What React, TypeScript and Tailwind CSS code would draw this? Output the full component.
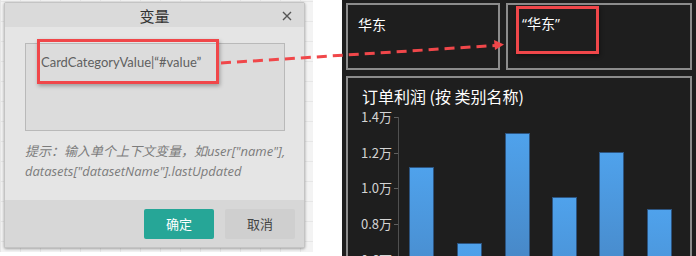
import React from "react";

const bars = [
  { x: 61, top: 61 },
  { x: 109, top: 137 },
  { x: 157, top: 27 },
  { x: 204, top: 91 },
  { x: 251, top: 46 },
  { x: 299, top: 103 },
];

const ticks = [
  { y: 11, label: "1.4万" },
  { y: 47, label: "1.2万" },
  { y: 82, label: "1.0万" },
  { y: 118, label: "0.8万" },
  { y: 154, label: "0.6万" },
];

export default function App() {
  return (
    <div className="relative w-[696px] h-[256px] bg-white overflow-hidden flex">
      {/* Left editor area */}
      <div className="w-[313px] h-[252px] bg-[#f3f3f3] bg-[linear-gradient(#e6e6e6_1px,transparent_1px),linear-gradient(90deg,#e6e6e6_1px,transparent_1px)] bg-[size:20px_20px] bg-[position:0_1px] pl-[4px] pt-[2px]">
        <div className="w-[301px] h-[246px] flex flex-col border border-[#c4c4c4] rounded-[2px] shadow-[0_1px_3px_rgba(0,0,0,0.35)] bg-[#e5e5e5] overflow-hidden font-['Open_Sans','Noto_Sans_CJK_SC',sans-serif]">
          <div className="relative h-[24px] bg-[#dadada] flex items-center justify-center shrink-0">
            <span className="text-[15px] text-[#333] font-['Noto_Sans_CJK_SC',sans-serif] leading-none">变量</span>
            <svg className="absolute right-[12px] top-[8px]" width="10" height="10" viewBox="0 0 10 10">
              <path d="M1 1 L9 9 M9 1 L1 9" stroke="#555" strokeWidth="1.4" />
            </svg>
          </div>
          <div className="flex-1 px-[20px] pt-[16px]">
            <div className="w-[260px] h-[88px] bg-[#dcdcdc] border border-[#b9b9b9] pl-[15px] pt-[9px] text-[13px] leading-[18px] text-[#606060] font-['Lato','Noto_Sans_CJK_SC',sans-serif]">
              CardCategoryValue|“#value”
            </div>
            <div className="mt-[10px] text-[13px] leading-[20px] italic text-[#7c7c7c] font-['Open_Sans','Noto_Sans_CJK_SC',sans-serif] whitespace-nowrap">
              <div>提示：输入单个上下文变量，如user["name"],</div>
              <div>datasets["datasetName"].lastUpdated</div>
            </div>
          </div>
          <div className="h-[47px] bg-[#d7d7d7] flex items-center justify-end gap-[11px] pr-[9px] shrink-0">
            <button className="w-[70px] h-[30px] bg-[#26a697] rounded-[2px] text-white text-[13px] font-['Noto_Sans_CJK_SC',sans-serif]">确定</button>
            <button className="w-[70px] h-[30px] bg-[#cfcfcf] rounded-[2px] text-[#444] text-[13px] font-['Noto_Sans_CJK_SC',sans-serif]">取消</button>
          </div>
        </div>
      </div>

      <div className="w-[29px] h-full bg-white" />

      {/* Right dark dashboard */}
      <div className="flex-1 h-[256px] bg-[#1e1e1e] pl-[4px] pr-[4px] pt-[3px] flex flex-col gap-[6px] overflow-hidden font-['Noto_Sans_CJK_SC',sans-serif]">
        <div className="flex gap-[6px] h-[67px] shrink-0">
          <div className="w-[154px] border-2 border-[#8c8c8c] pl-[10px] pt-[10px] text-[14px] leading-[18px] text-white">华东</div>
          <div className="flex-1 border-2 border-[#8c8c8c] pl-[14px] pt-[10px] text-[14px] leading-[18px] text-white font-['Open_Sans','Noto_Sans_CJK_SC',sans-serif]">“华东”</div>
        </div>
        <div className="h-[240px] shrink-0 border-2 border-[#8c8c8c] flex flex-col">
          <div className="pl-[14px] pt-[8px] text-[16px] leading-[20px] text-white">订单利润 (按 类别名称)</div>
          <svg width="342" height="160" className="block">
            <defs>
              <linearGradient id="bar" x1="0" y1="0" x2="0" y2="1">
                <stop offset="0" stopColor="#4fa2ec" />
                <stop offset="1" stopColor="#4379b2" />
              </linearGradient>
            </defs>
            <line x1="50.5" y1="11" x2="50.5" y2="160" stroke="#505050" strokeWidth="1" />
            {ticks.map((t) => (
              <g key={t.label}>
                <line x1="46" y1={t.y + 0.5} x2="50" y2={t.y + 0.5} stroke="#606060" strokeWidth="1" />
                <text x="44" y={t.y + 4.5} textAnchor="end" fontSize="13" fill="#d4d4d4" fontFamily="'Noto Sans CJK SC', sans-serif">{t.label}</text>
              </g>
            ))}
            {bars.map((b, i) => (
              <rect key={i} x={b.x + 0.5} y={b.top + 0.5} width="24" height={200} fill="url(#bar)" stroke="#2c5480" strokeWidth="1" />
            ))}
          </svg>
        </div>
      </div>

      {/* Annotations overlay */}
      <div className="absolute left-[37px] top-[39px] w-[182px] h-[45px] border-[3px] border-[#f0474a] shadow-[1px_2px_4px_rgba(0,0,0,0.3)]" />
      <div className="absolute left-[516px] top-[6px] w-[83px] h-[48px] border-[3px] border-[#f0474a] shadow-[1px_2px_4px_rgba(0,0,0,0.4)]" />
      <svg className="absolute left-0 top-0" width="696" height="256" style={{ pointerEvents: "none" }}>
        <line x1="221" y1="63" x2="495" y2="45.5" stroke="#f0474a" strokeWidth="3" strokeDasharray="10 6" />
        <polygon points="504,44.5 494,40 495,50" fill="#f0474a" />
      </svg>
    </div>
  );
}
